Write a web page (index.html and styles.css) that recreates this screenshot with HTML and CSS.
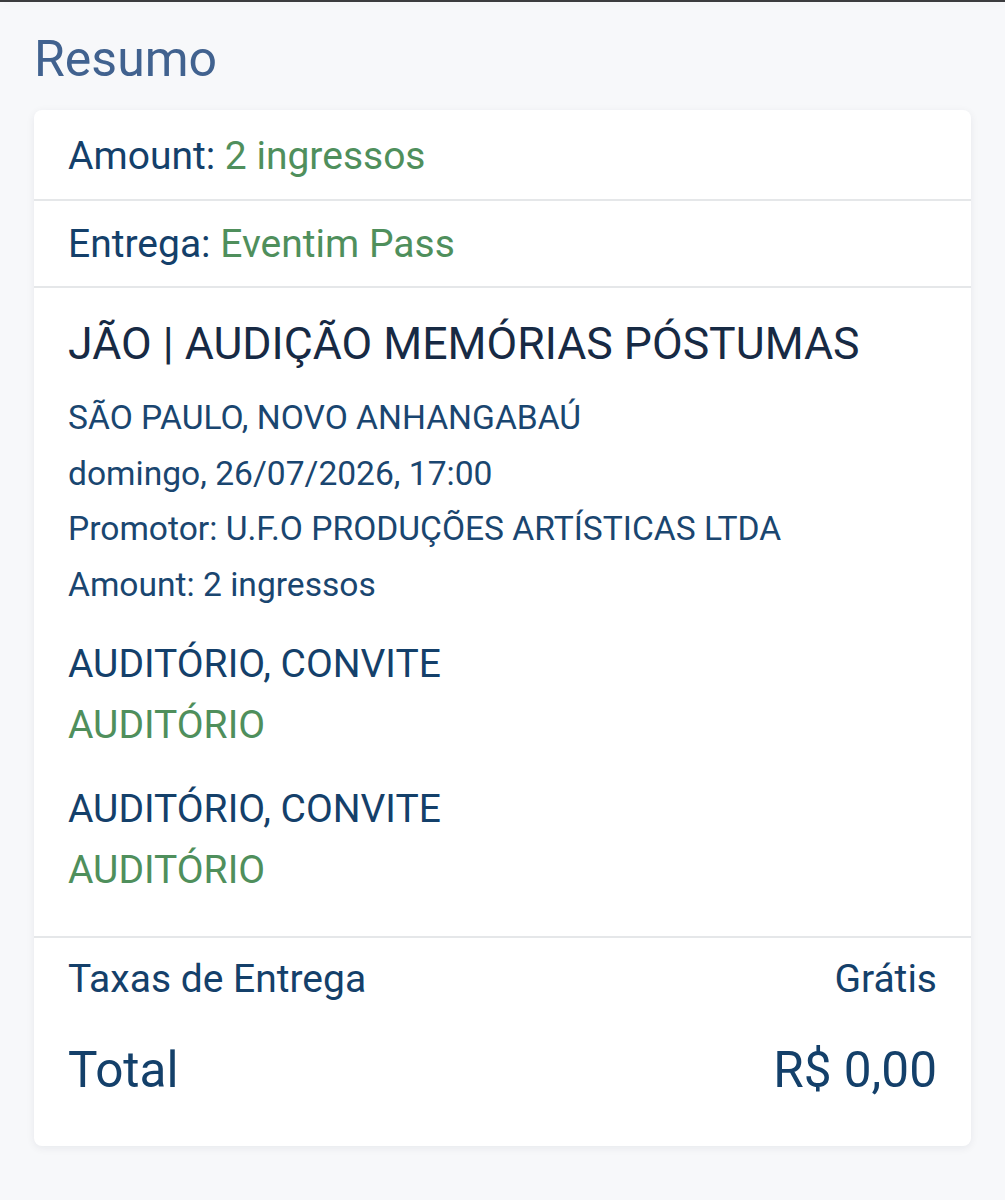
FILE: index.html
```
<!DOCTYPE html>
<html lang="pt-BR">
<head>
<meta charset="utf-8">
<title>Resumo</title>
<link rel="stylesheet" href="styles.css">
</head>
<body>
<div class="topbar"></div>
<main class="page">
  <h1 class="title">Resumo</h1>
  <section class="card">
    <div class="row row-amount"><span class="label">Amount:</span> <span class="value">2 ingressos</span></div>
    <div class="row row-delivery"><span class="label">Entrega:</span> <span class="value">Eventim Pass</span></div>
    <div class="event">
      <h2 class="event-name">JÃO | AUDIÇÃO MEMÓRIAS PÓSTUMAS</h2>
      <div class="event-info">
        <div class="info-line">SÃO PAULO, NOVO ANHANGABAÚ</div>
        <div class="info-line">domingo, 26/07/2026, 17:00</div>
        <div class="info-line">Promotor: U.F.O PRODUÇÕES ARTÍSTICAS LTDA</div>
        <div class="info-line">Amount: 2 ingressos</div>
      </div>
      <div class="ticket">
        <div class="ticket-type">AUDITÓRIO, CONVITE</div>
        <div class="ticket-area">AUDITÓRIO</div>
      </div>
      <div class="ticket">
        <div class="ticket-type">AUDITÓRIO, CONVITE</div>
        <div class="ticket-area">AUDITÓRIO</div>
      </div>
    </div>
    <div class="totals">
      <div class="fee-line"><span>Taxas de Entrega</span><span>Grátis</span></div>
      <div class="total-line"><span>Total</span><span>R$ 0,00</span></div>
    </div>
  </section>
</main>
</body>
</html>
```
FILE: styles.css
```
* { box-sizing: border-box; }
html, body {
  margin: 0;
  padding: 0;
  background: #f7f8fa;
  font-family: Roboto, "Liberation Sans", sans-serif;
}
.topbar {
  height: 2px;
  background: #3b3c3e;
  box-shadow: 0 2px 10px rgba(0,0,0,0.06);
}
.page {
  padding: 32px 34px 40px;
}
.title {
  margin: 0 0 26px;
  font-size: 50px;
  line-height: 50px;
  font-weight: 400;
  color: #41628f;
  letter-spacing: 0;
}
.card {
  background: #ffffff;
  border-radius: 8px;
  box-shadow: 0 2px 8px rgba(20, 30, 50, 0.07);
}
.row {
  font-size: 39px;
  line-height: 46px;
  padding: 0 34px;
  border-bottom: 2px solid #e5e7e9;
  color: #14406a;
}
.row-amount { padding-top: 23px; padding-bottom: 20px; }
.row-delivery { padding-top: 20px; padding-bottom: 19px; }
.value { color: #4f8f5c; }
.event {
  padding: 30px 34px 35px;
  border-bottom: 2px solid #e5e7e9;
}
.event-name {
  margin: 0;
  font-size: 44.6px;
  line-height: 52px;
  font-weight: 400;
  color: #172a44;
}
.event-info {
  margin-top: 20px;
}
.info-line {
  font-size: 33.6px;
  line-height: 55.7px;
  color: #1a4670;
}
.ticket {
  margin-top: 21px;
  font-size: 39px;
  line-height: 61px;
}
.ticket + .ticket { margin-top: 23px; }
.ticket-type { color: #14406a; }
.ticket-area { color: #4f8f5c; }
.totals {
  padding: 18px 34px 47px;
  color: #14406a;
}
.fee-line, .total-line {
  display: flex;
  justify-content: space-between;
}
.fee-line {
  font-size: 39px;
  line-height: 46px;
}
.total-line {
  margin-top: 39px;
  font-size: 49.5px;
  line-height: 58px;
}
```
